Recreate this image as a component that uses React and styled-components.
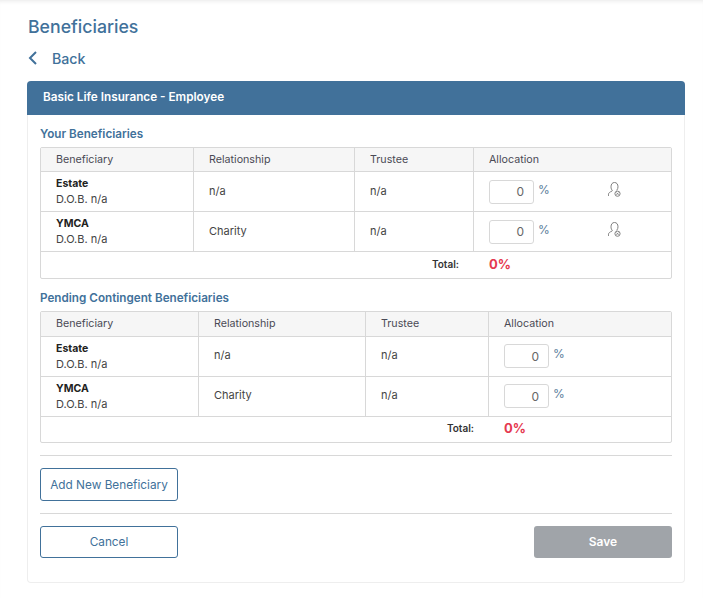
import React from 'react';
import styled, { createGlobalStyle } from 'styled-components';

const blue = '#41719a';

const yourRows = [
  { name: 'Estate', relationship: 'n/a', trustee: 'n/a' },
  { name: 'YMCA', relationship: 'Charity', trustee: 'n/a' },
];

const RemoveIcon = () => (
  <svg width="15" height="17" viewBox="0 0 15 17" fill="none" stroke="#808080" strokeWidth="1">
    <path d="M5.300 9.500C4.400 8.600 4 7.300 4 5.800 4 3.200 5.300 1.500 7.500 1.500S11 3.200 11 5.800c0 1.300-.4 2.400-1.100 3.300" strokeLinecap="round" />
    <path d="M1.500 14.500v-1.300c0-1.300 1.400-2.200 3.200-3" strokeLinecap="round" />
    <circle cx="10.500" cy="12.700" r="2.600" />
    <path d="M9.400 11.600l2.200 2.200M11.600 11.600l-2.200 2.200" strokeWidth="0.9" />
  </svg>
);

const BeneficiaryTable = ({ rows, columns, removable, headHeight, totalHeight }) => (
  <Table>
    <Row columns={columns} height={headHeight} head>
      <HeadCell>Beneficiary</HeadCell>
      <HeadCell>Relationship</HeadCell>
      <HeadCell>Trustee</HeadCell>
      <HeadCell last>Allocation</HeadCell>
    </Row>
    {rows.map((row) => (
      <Row columns={columns} height={40} key={row.name}>
        <Cell flush>
          <Name>{row.name}</Name>
          <Dob>D.O.B. n/a</Dob>
        </Cell>
        <Cell>{row.relationship}</Cell>
        <Cell>{row.trustee}</Cell>
        <Cell last flush>
          <Allocation>
            <PercentInput readOnly value="0" />
            <Percent>%</Percent>
            {removable && <RemoveSlot><RemoveIcon /></RemoveSlot>}
          </Allocation>
        </Cell>
      </Row>
    ))}
    <TotalRow columns={columns} height={totalHeight}>
      <TotalLabel>Total:</TotalLabel>
      <TotalValue>0%</TotalValue>
    </TotalRow>
  </Table>
);

const App = () => (
  <>
    <GlobalStyle />
    <Page>
      <Title>Beneficiaries</Title>
      <BackLink>
        <svg width="10" height="14" viewBox="0 0 10 14" fill="none" stroke={blue} strokeWidth="2">
          <path d="M8 1L2 7l6 6" />
        </svg>
        Back
      </BackLink>
      <Card>
        <CardHeader>Basic Life Insurance - Employee</CardHeader>
        <CardBody>
          <SectionTitle>Your Beneficiaries</SectionTitle>
          <BeneficiaryTable rows={yourRows} columns="153px 161px 119px 1fr" headHeight={24} totalHeight={26} removable />
          <SectionTitle>Pending Contingent Beneficiaries</SectionTitle>
          <BeneficiaryTable rows={yourRows} columns="158px 167px 123px 1fr" headHeight={24.5} totalHeight={25.5} />
          <Rule />
          <OutlineButton>Add New Beneficiary</OutlineButton>
          <Rule />
          <Actions>
            <OutlineButton short>Cancel</OutlineButton>
            <SaveButton>Save</SaveButton>
          </Actions>
        </CardBody>
      </Card>
    </Page>
  </>
);

export default App;

const GlobalStyle = createGlobalStyle`
  html, body {
    margin: 0;
    background: #fff;
    font-family: Inter, "Liberation Sans", sans-serif;
  }
`;

const Page = styled.div`
  width: 703px;
  height: 598px;
  box-sizing: border-box;
  padding: 15px 18px 0 27px;
  box-shadow: inset 0 4px 4px -3px #e8e8e8;
  overflow: hidden;
`;

const Title = styled.h1`
  margin: 0 0 0 1px;
  font-size: 17.700px;
  line-height: 24px;
  font-weight: 500;
  color: ${blue};
`;

const BackLink = styled.div`
  display: flex;
  align-items: center;
  gap: 14px;
  margin: 7px 0 11px 1px;
  height: 24px;
  font-size: 14.200px;
  font-weight: 500;
  color: ${blue};
`;

const Card = styled.div`
  width: 658px;
  height: 502px;
  box-sizing: border-box;
  border: 1px solid #eeeeee;
  border-top: 0;
  border-radius: 4px;
`;

const CardHeader = styled.div`
  margin: 0 -1px;
  height: 34px;
  padding-left: 16px;
  line-height: 32px;
  background: ${blue};
  border-radius: 4px 4px 0 0;
  color: #fff;
  font-size: 11.750px;
  font-weight: 600;
`;

const CardBody = styled.div`
  padding: 0 12px;
`;

const SectionTitle = styled.h2`
  margin: 12px 0 0;
  height: 21px;
  line-height: 15px;
  font-size: 11.700px;
  font-weight: 600;
  color: ${blue};
`;

const Table = styled.div`
  border: 1px solid #d8d8d8;
  border-radius: 2px;
  margin-top: -1px;
`;

const Row = styled.div`
  display: grid;
  grid-template-columns: ${(p) => p.columns};
  height: ${(p) => p.height}px;
  box-sizing: border-box;
  border-bottom: 1px solid #d8d8d8;
  background: ${(p) => (p.head ? '#f6f6f6' : '#fff')};
`;

const Cell = styled.div`
  display: flex;
  flex-direction: column;
  justify-content: center;
  padding: 0 0 ${(p) => (p.flush ? 0 : 2)}px 15px;
  border-right: ${(p) => (p.last ? '0' : '1px solid #d8d8d8')};
  font-size: 11px;
  color: #444;
`;

const HeadCell = styled(Cell)`
  padding-bottom: 1px;
  font-size: 10.700px;
  color: #4a4a55;
`;

const Name = styled.div`
  font-size: 10.500px;
  line-height: 15px;
  font-weight: 700;
  color: #222;
`;

const Dob = styled.div`
  margin-top: 1px;
  font-size: 11px;
  line-height: 15px;
  color: #444;
`;

const Allocation = styled.div`
  display: flex;
  align-items: flex-start;
`;

const PercentInput = styled.input`
  width: 45px;
  height: 24px;
  box-sizing: border-box;
  margin: 0;
  padding: 0 9px 0 0;
  border: 1px solid #d8d8d8;
  border-radius: 3px;
  text-align: right;
  font: 12px Inter, "Liberation Sans", sans-serif;
  color: #666;
  outline: none;
`;

const Percent = styled.span`
  margin: 3px 0 0 4px;
  font-size: 12px;
  line-height: 14px;
  color: #5b7d9a;
`;

const RemoveSlot = styled.span`
  display: flex;
  margin: 1px 0 0 57px;
`;

const TotalRow = styled.div`
  display: grid;
  grid-template-columns: ${(p) => p.columns};
  height: ${(p) => p.height}px;
  padding-bottom: 2px;
  box-sizing: border-box;
  align-items: center;
`;

const TotalLabel = styled.div`
  grid-column: 1 / 4;
  text-align: right;
  padding-right: 15px;
  font-size: 10px;
  font-weight: 600;
  color: #333;
`;

const TotalValue = styled.div`
  padding-left: 15px;
  font-size: 13px;
  font-weight: 700;
  color: #e5394f;
`;

const Rule = styled.hr`
  margin: 12px 0;
  border: 0;
  border-top: 1px solid #d8d8d8;
`;

const OutlineButton = styled.button`
  display: block;
  width: 138px;
  height: ${(p) => (p.short ? 32 : 33)}px;
  padding: 0 0 ${(p) => (p.short ? 1 : 0)}px;
  border: 1px solid ${blue};
  border-radius: 3px;
  background: #fff;
  color: ${blue};
  font: 11.800px Inter, "Liberation Sans", sans-serif;
`;

const Actions = styled.div`
  display: flex;
  justify-content: space-between;
`;

const SaveButton = styled.button`
  width: 138px;
  height: 32px;
  padding: 0 0 1px;
  border: 0;
  border-radius: 3px;
  background: #a0a4a9;
  color: #fff;
  font: 600 12px Inter, "Liberation Sans", sans-serif;
`;
